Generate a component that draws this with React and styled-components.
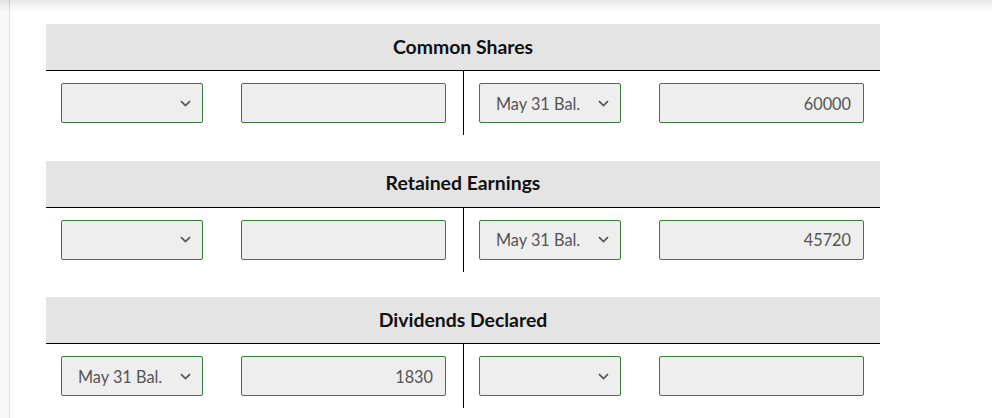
import React from "react";
import styled, { createGlobalStyle } from "styled-components";

const Global = createGlobalStyle`
  html, body { margin: 0; padding: 0; background: #fff; }
  body { font-family: Lato, "Open Sans", sans-serif; }
`;

const Page = styled.div`
  position: relative;
  width: 992px;
  height: 418px;
  overflow: hidden;
  display: flex;
  background: #fff;
`;

const TopShadow = styled.div`
  position: absolute;
  left: 0;
  top: 0;
  right: 0;
  height: 12px;
  background: linear-gradient(to bottom, rgba(0,0,0,0.09), rgba(0,0,0,0));
  pointer-events: none;
`;

const SideRail = styled.div`
  width: 9px;
  flex: none;
  background: #f9f9f9;
  border-right: 1px solid #dcdcdc;
`;

const Content = styled.div`
  padding: 24px 0 0 36px;
  display: flex;
  flex-direction: column;
  gap: 25.5px;
`;

const Account = styled.section`
  width: 834px;
`;

const Header = styled.div`
  box-sizing: border-box;
  height: 47px;
  padding-bottom: 2px;
  background: #e4e4e4;
  border-bottom: 1px solid #000;
  display: flex;
  align-items: center;
  justify-content: center;
  font-weight: 700;
  font-size: 19.4px;
  color: #111;
`;

const Body = styled.div`
  display: grid;
  grid-template-columns: 417px 417px;
`;

const Side = styled.div`
  display: flex;
  align-items: center;
  gap: 38px;
  padding: 12px 0 12px 15px;
  border-left: ${(p) => (p.$right ? "1px solid #000" : "none")};
`;

const Field = styled.div`
  box-sizing: border-box;
  height: 40px;
  width: ${(p) => p.$w}px;
  background: #eeeeee;
  border: 1px solid #3a7a3a;
  border-radius: 2px;
  display: flex;
  align-items: center;
  font-size: 16.3px;
  color: #555;
`;

const SelectBox = styled(Field)`
  padding: 0 11px 0 16px;
  justify-content: space-between;
`;

const InputBox = styled(Field)`
  padding: 0 12px;
  justify-content: flex-end;
`;

const Chevron = () => (
  <svg width="11" height="7" viewBox="0 0 11 7" style={{ marginLeft: "auto" }}>
    <path d="M1 1.2 L5.5 5.5 L10 1.2" fill="none" stroke="#555" strokeWidth="1.7" />
  </svg>
);

const Select = ({ value }) => (
  <SelectBox $w={142}>
    <span>{value}</span>
    <Chevron />
  </SelectBox>
);

const Input = ({ value }) => <InputBox $w={205}>{value}</InputBox>;

const accounts = [
  { title: "Common Shares", left: ["", ""], right: ["May 31 Bal.", "60000"] },
  { title: "Retained Earnings", left: ["", ""], right: ["May 31 Bal.", "45720"] },
  { title: "Dividends Declared", left: ["May 31 Bal.", "1830"], right: ["", ""] },
];

export default function App() {
  return (
    <Page>
      <Global />
      <SideRail />
      <Content>
        {accounts.map((a) => (
          <Account key={a.title}>
            <Header>{a.title}</Header>
            <Body>
              <Side>
                <Select value={a.left[0]} />
                <Input value={a.left[1]} />
              </Side>
              <Side $right>
                <Select value={a.right[0]} />
                <Input value={a.right[1]} />
              </Side>
            </Body>
          </Account>
        ))}
      </Content>
      <TopShadow />
    </Page>
  );
}
